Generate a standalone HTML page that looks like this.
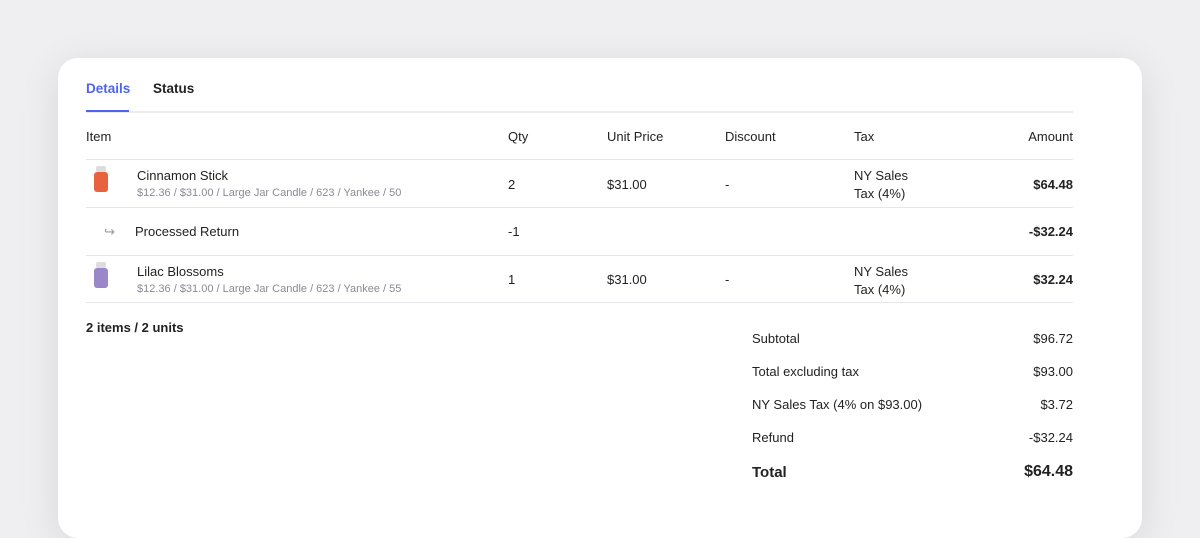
<!DOCTYPE html>
<html><head><style>
body{margin:0;width:1200px;height:518px;background:#efeff1;overflow:hidden;font-family:"Liberation Sans",sans-serif;color:#222;position:relative}
.card{position:absolute;left:58px;top:58px;width:1084px;height:480px;background:#fff;border-radius:20px;box-shadow:0 8px 40px rgba(0,0,0,0.10)}
.a{position:absolute;font-size:13px;white-space:nowrap}
.r{text-align:right}
.line{position:absolute;left:86px;width:987px;height:1px;background:#e6e6ea}
.sub{position:absolute;font-size:11px;color:#8a8a95;white-space:nowrap}
.jar{position:absolute;width:14px;height:20px;border-radius:3px}
.lid{position:absolute;width:10px;height:6px;background:#ddd;border-radius:2px}
</style></head><body>
<div class="card"></div>
<div class="a" style="left:86px;top:81px;font-size:13.5px;font-weight:bold;color:#4f63f0">Details</div>
<div class="a" style="left:153px;top:81px;font-size:13.5px;font-weight:bold">Status</div>
<div class="line" style="top:111px;height:2px;background:#ececef"></div>
<div style="position:absolute;left:86px;top:110px;width:43px;height:2px;background:#4f63f0"></div>
<div class="a" style="left:86px;top:129px">Item</div>
<div class="a" style="left:508px;top:129px">Qty</div>
<div class="a" style="left:607px;top:129px">Unit Price</div>
<div class="a" style="left:725px;top:129px">Discount</div>
<div class="a" style="left:854px;top:129px">Tax</div>
<div class="a r" style="right:127px;top:129px">Amount</div>
<div class="line" style="top:159px"></div>
<div class="lid" style="left:96px;top:166px"></div>
<div class="jar" style="left:94px;top:172px;background:#e8623e"></div>
<div class="a" style="left:137px;top:168px">Cinnamon Stick</div>
<div class="sub" style="left:137px;top:187px">$12.36 / $31.00 / Large Jar Candle / 623 / Yankee / 50</div>
<div class="a" style="left:508px;top:177px">2</div>
<div class="a" style="left:607px;top:177px">$31.00</div>
<div class="a" style="left:725px;top:177px">-</div>
<div class="a" style="left:854px;top:167px;line-height:18px">NY Sales<br>Tax (4%)</div>
<div class="a r" style="right:127px;top:177px;font-weight:bold">$64.48</div>
<div class="line" style="top:207px"></div>
<div class="a" style="left:104px;top:224px;color:#999">↪</div>
<div class="a" style="left:135px;top:224px">Processed Return</div>
<div class="a" style="left:508px;top:224px">-1</div>
<div class="a r" style="right:127px;top:224px;font-weight:bold">-$32.24</div>
<div class="line" style="top:255px"></div>
<div class="lid" style="left:96px;top:262px"></div>
<div class="jar" style="left:94px;top:268px;background:#9a87c9"></div>
<div class="a" style="left:137px;top:264px">Lilac Blossoms</div>
<div class="sub" style="left:137px;top:283px">$12.36 / $31.00 / Large Jar Candle / 623 / Yankee / 55</div>
<div class="a" style="left:508px;top:272px">1</div>
<div class="a" style="left:607px;top:272px">$31.00</div>
<div class="a" style="left:725px;top:272px">-</div>
<div class="a" style="left:854px;top:263px;line-height:18px">NY Sales<br>Tax (4%)</div>
<div class="a r" style="right:127px;top:272px;font-weight:bold">$32.24</div>
<div class="line" style="top:302px"></div>
<div class="a" style="left:86px;top:320px;font-weight:bold">2 items / 2 units</div>
<div class="a" style="left:752px;top:331px">Subtotal</div><div class="a r" style="right:127px;top:331px">$96.72</div>
<div class="a" style="left:752px;top:364px">Total excluding tax</div><div class="a r" style="right:127px;top:364px">$93.00</div>
<div class="a" style="left:752px;top:397px">NY Sales Tax (4% on $93.00)</div><div class="a r" style="right:127px;top:397px">$3.72</div>
<div class="a" style="left:752px;top:430px">Refund</div><div class="a r" style="right:127px;top:430px">-$32.24</div>
<div class="a" style="left:752px;top:464px;font-size:15px;font-weight:bold">Total</div><div class="a r" style="right:127px;top:463px;font-size:16px;font-weight:bold">$64.48</div>
</body></html>
